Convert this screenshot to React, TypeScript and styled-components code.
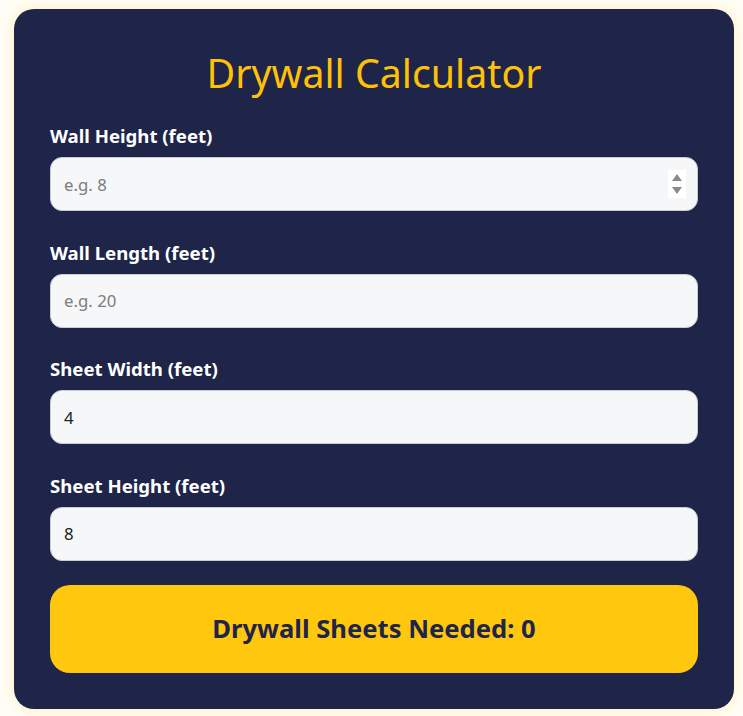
import React, { FC, useState } from 'react'
import styled, { createGlobalStyle } from 'styled-components'

const GlobalStyle = createGlobalStyle`
  html, body {
    margin: 0;
    padding: 0;
    background: #fffdf6;
  }
  body {
    font-family: "Noto Sans", "Open Sans", sans-serif;
  }
  * {
    box-sizing: border-box;
  }
`

interface Field {
  id: string
  label: string
  placeholder: string
  initial: string
  showSpinner?: boolean
}

const fields: Field[] = [
  { id: 'wallHeight', label: 'Wall Height (feet)', placeholder: 'e.g. 8', initial: '', showSpinner: true },
  { id: 'wallLength', label: 'Wall Length (feet)', placeholder: 'e.g. 20', initial: '' },
  { id: 'sheetWidth', label: 'Sheet Width (feet)', placeholder: '', initial: '4' },
  { id: 'sheetHeight', label: 'Sheet Height (feet)', placeholder: '', initial: '8' },
]

const Spinner: FC = () => (
  <_Spinner>
    <svg width="10" height="8" viewBox="0 0 10 8">
      <path d="M5 0 L10 7 L0 7 Z" fill="#8a8a8a" />
    </svg>
    <svg width="10" height="8" viewBox="0 0 10 8">
      <path d="M0 1 L10 1 L5 8 Z" fill="#8a8a8a" />
    </svg>
  </_Spinner>
)

const App: FC = () => {
  const [values, setValues] = useState<Record<string, string>>(
    Object.fromEntries(fields.map(f => [f.id, f.initial]))
  )

  const h = parseFloat(values.wallHeight) || 0
  const l = parseFloat(values.wallLength) || 0
  const sw = parseFloat(values.sheetWidth) || 0
  const sh = parseFloat(values.sheetHeight) || 0
  const sheets = sw > 0 && sh > 0 ? Math.ceil((h * l) / (sw * sh)) : 0

  return (
    <>
      <GlobalStyle />
      <Page>
        <Card>
          <Title>Drywall Calculator</Title>
          <Form>
            {fields.map(f => (
              <FieldGroup key={f.id}>
                <Label htmlFor={f.id}>{f.label}</Label>
                <InputWrap>
                  <Input
                    id={f.id}
                    type="number"
                    placeholder={f.placeholder}
                    value={values[f.id]}
                    onChange={e => setValues({ ...values, [f.id]: e.target.value })}
                  />
                  {f.showSpinner && <Spinner />}
                </InputWrap>
              </FieldGroup>
            ))}
          </Form>
          <Result>Drywall Sheets Needed: {sheets}</Result>
        </Card>
      </Page>
    </>
  )
}

export default App

const Page = styled.div`
  padding: 9px 9px 8px 14px;
`

const Card = styled.div`
  width: 720px;
  background: #1e2549;
  border-radius: 20px;
  padding: 40px 36px 36px;
  box-shadow: 0 0 14px rgba(255, 204, 40, 0.28);
`

const Title = styled.h1`
  margin: 0 0 27px;
  font-family: "Noto Sans", "Open Sans", sans-serif;
  font-weight: 400;
  font-size: 39.3px;
  line-height: 48px;
  text-align: center;
  color: #ffc107;
`

const Form = styled.div`
  display: flex;
  flex-direction: column;
  gap: 29.6px;
`

const FieldGroup = styled.div`
  display: flex;
  flex-direction: column;
  gap: 9px;
`

const Label = styled.label`
  font-size: 18.6px;
  font-weight: 700;
  line-height: 24px;
  color: #ffffff;
`

const InputWrap = styled.div`
  position: relative;
`

const Input = styled.input`
  width: 100%;
  height: 54px;
  padding: 0 13px;
  border: 1px solid #c9ccd3;
  border-radius: 12px;
  background: #f5f7f8;
  font-family: "Noto Sans", "Open Sans", sans-serif;
  font-size: 16.8px;
  color: #222;
  outline: none;
  -moz-appearance: textfield;

  &::placeholder {
    color: #7d7d7d;
  }
  &::-webkit-outer-spin-button,
  &::-webkit-inner-spin-button {
    -webkit-appearance: none;
    margin: 0;
  }
`

const _Spinner = styled.div`
  position: absolute;
  right: 12px;
  top: 13px;
  width: 18px;
  height: 28px;
  background: #ffffff;
  display: flex;
  flex-direction: column;
  align-items: center;
  justify-content: center;
  gap: 4px;
`

const Result = styled.div`
  margin-top: 24px;
  height: 88px;
  border-radius: 20px;
  background: #ffc70d;
  display: flex;
  align-items: center;
  justify-content: center;
  font-size: 25.6px;
  font-weight: 700;
  color: #1e2549;
`
